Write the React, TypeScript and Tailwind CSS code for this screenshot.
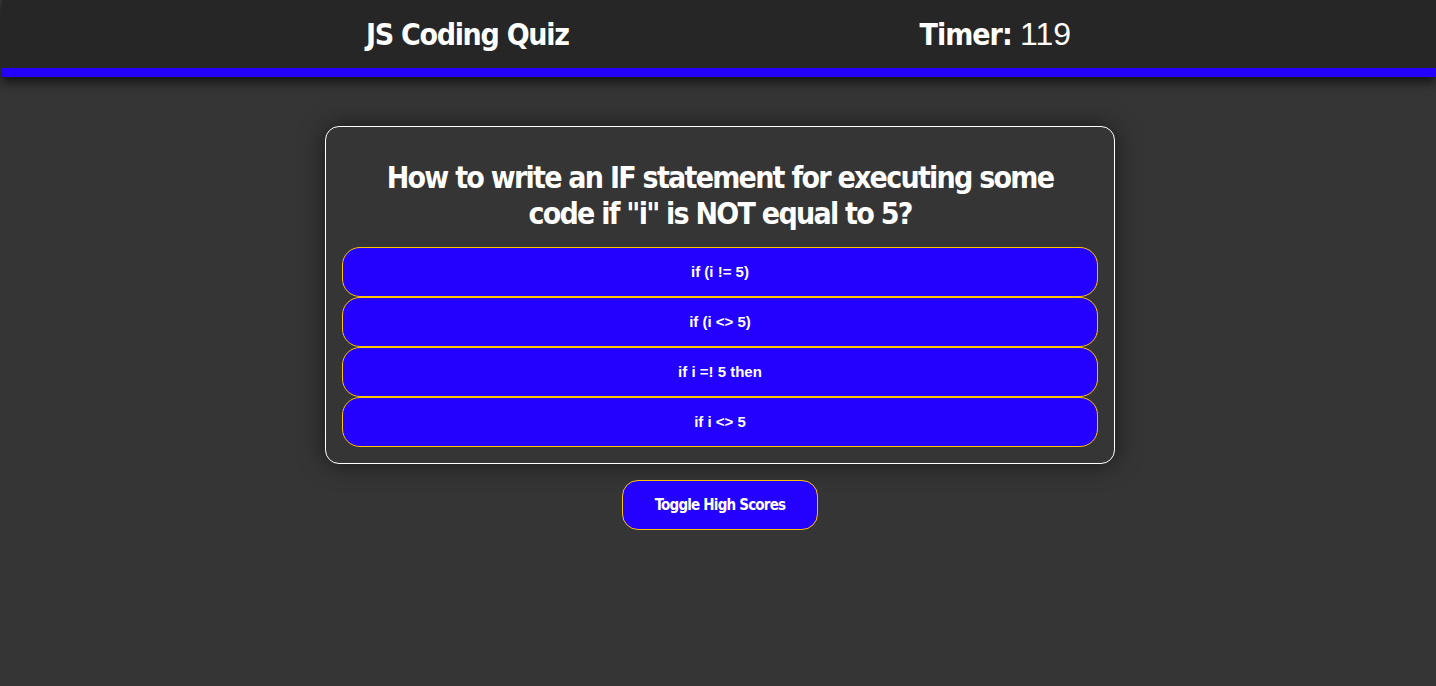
import * as React from "react";

const answers = ["if (i != 5)", "if (i <> 5)", "if i =! 5 then", "if i <> 5"];

export default function App() {
  const [time] = React.useState(119);

  return (
    <div className="min-h-[686px] bg-[#353535] text-white pl-[2px]" style={{ fontFamily: "'DejaVu Sans Condensed', 'Liberation Sans', sans-serif" }}>
      {/* Header */}
      <header className="bg-[#262626] shadow-[0_5px_10px_rgba(0,0,0,0.65)]">
        <div className="h-[68px] flex items-center justify-evenly">
          <h1 className="text-[30px] font-bold tracking-[-1.3px] translate-x-[4px]">JS Coding Quiz</h1>
          <div className="text-[30px] font-bold tracking-[-1px] -translate-x-[5px]">
            Timer: <span className="font-normal text-[32px] tracking-normal font-['Liberation_Sans',sans-serif]">{time}</span>
          </div>
        </div>
        <div className="h-[9px] bg-[#2400ff]" />
      </header>

      <main className="flex flex-col items-center pt-[49px] pl-[2px]">
        {/* Question card */}
        <div className="w-[790px] rounded-[14px] border border-white bg-[#353535] px-4 pb-4 pt-[33px] shadow-[0_0_24px_rgba(0,0,0,0.55)]">
          <h2 className="text-center text-[30px] font-bold leading-[36px] tracking-[-1.75px] mb-[15px]">
            How to write an IF statement for executing some
            <br />
            code if "i" is NOT equal to 5?
          </h2>
          <div className="flex flex-col">
            {answers.map((a) => (
              <button
                key={a}
                className="h-[50px] w-full rounded-[18px] border border-[#ffc400] bg-[#2400ff] text-[15px] font-bold text-white font-['Liberation_Sans',sans-serif] tracking-[0px]"
              >
                {a}
              </button>
            ))}
          </div>
        </div>

        <button className="mt-[16px] h-[50px] w-[196px] rounded-[16px] border border-[#ffc400] bg-[#2400ff] text-[15px] font-bold tracking-[-0.8px] text-white">
          Toggle High Scores
        </button>
      </main>
    </div>
  );
}
